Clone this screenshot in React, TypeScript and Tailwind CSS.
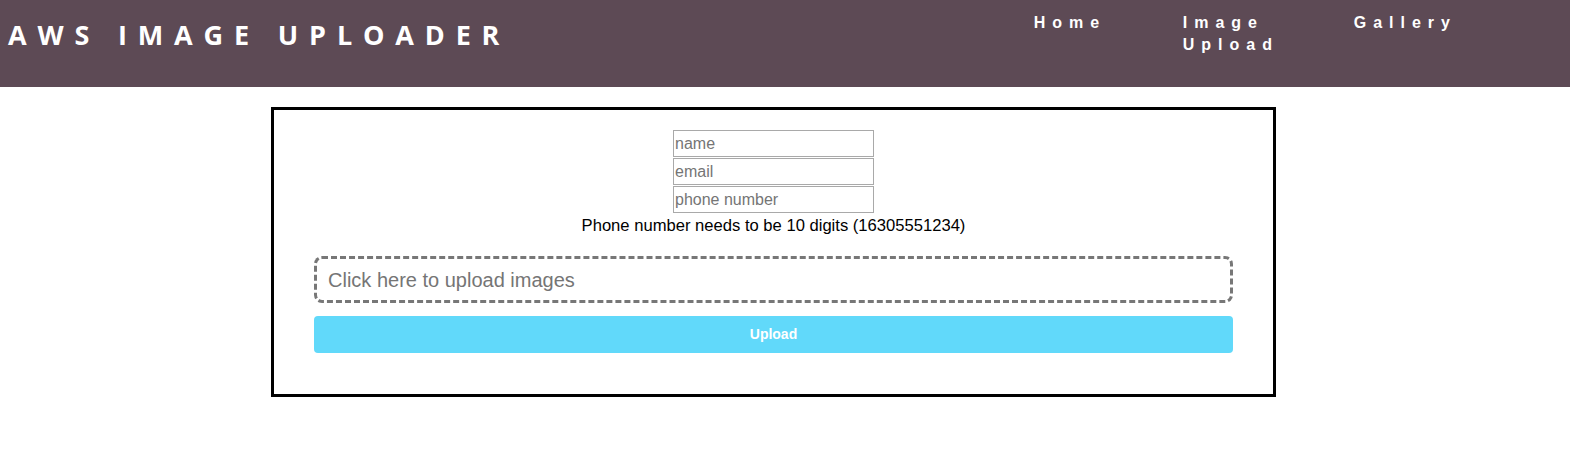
export default function App() {
  return (
    <div className="min-h-screen bg-white font-['Liberation_Sans',Arial,sans-serif]">
      {/* Header */}
      <header className="flex h-[87px] items-start justify-between bg-[#5d4a55] text-white">
        <h1 className="pl-[8px] pt-[17px] font-['Open_Sans',sans-serif] text-[27px] font-bold leading-[36px] tracking-[10.85px]">
          AWS IMAGE UPLOADER
        </h1>
        <nav className="pr-[113px] pt-[12px]">
          <ul className="flex items-start text-[16px] font-bold leading-[22px] tracking-[7px]">
            <li className="w-[149px]">
              <a href="#">Home</a>
            </li>
            <li className="w-[171px]">
              <a href="#" className="block w-[110px]">
                Image Upload
              </a>
            </li>
            <li>
              <a href="#">Gallery</a>
            </li>
          </ul>
        </nav>
      </header>

      {/* Upload form */}
      <main className="ml-[271px] mt-[20px] w-[1005px] border-[3px] border-black px-[40px] pb-[41px] pt-[20px]">
        <form className="flex flex-col items-center">
          <div className="flex flex-col gap-px">
            <input
              type="text"
              placeholder="name"
              className="h-[27px] w-[201px] border border-[#a9a9a9] px-[1px] text-[16px] outline-none placeholder:text-[#757575]"
            />
            <input
              type="email"
              placeholder="email"
              className="h-[27px] w-[201px] border border-[#a9a9a9] px-[1px] text-[16px] outline-none placeholder:text-[#757575]"
            />
            <input
              type="tel"
              placeholder="phone number"
              className="h-[27px] w-[201px] border border-[#a9a9a9] px-[1px] text-[16px] outline-none placeholder:text-[#757575]"
            />
          </div>
          <p className="mt-[3px] text-[16.6px] leading-[20px] text-black">
            Phone number needs to be 10 digits (16305551234)
          </p>

          <label className="mt-[20px] flex h-[47px] w-full cursor-pointer items-center rounded-lg border-[3px] border-dashed border-[#777] px-[11px] text-[20px] text-[#757575]">
            Click here to upload images
            <input type="file" multiple className="hidden" />
          </label>

          <button
            type="button"
            className="mt-[13px] h-[37px] w-full rounded bg-[#61d9fa] text-[14px] font-bold text-white"
          >
            Upload
          </button>
        </form>
      </main>
    </div>
  );
}
